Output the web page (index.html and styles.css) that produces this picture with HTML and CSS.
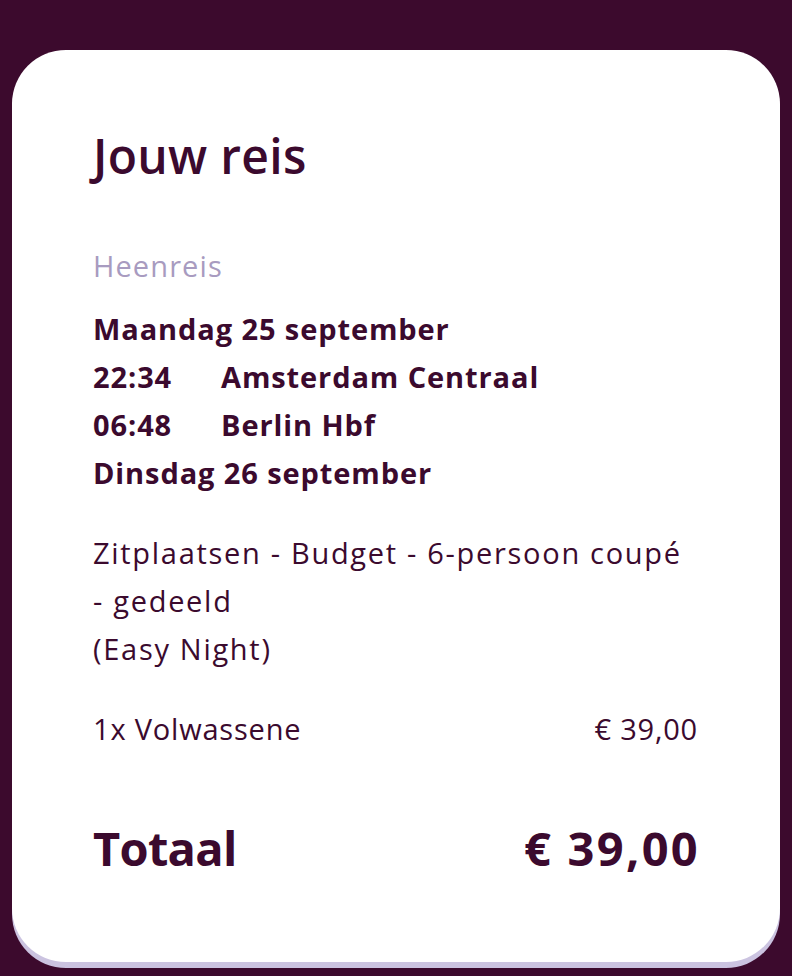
FILE: index.html
```html
<!DOCTYPE html>
<html lang="nl">
<head>
<meta charset="utf-8">
<link rel="stylesheet" href="styles.css">
</head>
<body>
<div class="page">
  <section class="card">
    <h1 class="title">Jouw reis</h1>
    <div class="leg-label">Heenreis</div>
    <div class="journey">
      <div class="line">Maandag 25 september</div>
      <div class="stop"><span class="time">22:34</span><span>Amsterdam Centraal</span></div>
      <div class="stop"><span class="time">06:48</span><span>Berlin Hbf</span></div>
      <div class="line">Dinsdag 26 september</div>
    </div>
    <div class="product">Zitplaatsen - Budget - 6-persoon coupé<br>- gedeeld<br>(Easy Night)</div>
    <div class="row"><span>1x Volwassene</span><span>€ 39,00</span></div>
    <div class="total"><span class="total-label">Totaal</span><span class="total-price">€ 39,00</span></div>
  </section>
</div>
</body>
</html>
```
FILE: styles.css
```css
html, body {
  margin: 0;
  padding: 0;
  background: #3c0a2d;
}
body {
  font-family: "Open Sans", "Lato", sans-serif;
  color: #3b0a2e;
}
.page {
  padding: 50px 12px 0 12px;
  height: 976px;
  box-sizing: border-box;
}
.card {
  background: #fff;
  border-radius: 54px;
  box-shadow: 0 6px 0 #cbc3e0;
  height: 912px;
  box-sizing: border-box;
  padding: 78px 82px 0 81px;
}
.title {
  margin: 0;
  font-size: 48px;
  font-weight: 600;
  line-height: 56px;
  letter-spacing: 0.3px;
}
.leg-label {
  margin-top: 64px;
  font-size: 29px;
  color: #a89bc0;
  font-weight: 500;
  line-height: 36px;
  letter-spacing: 1.1px;
}
.journey {
  margin-top: 21px;
  font-size: 29px;
  font-weight: 700;
  line-height: 48px;
  letter-spacing: 0.9px;
}
.stop {
  display: flex;
}
.time {
  width: 128px;
  flex: none;
}
.product {
  margin-top: 32px;
  font-size: 29px;
  line-height: 48px;
  letter-spacing: 1.7px;
}
.row {
  margin-top: 32px;
  display: flex;
  justify-content: space-between;
  font-size: 29px;
  line-height: 48px;
  letter-spacing: 0.8px;
}
.total {
  margin-top: 67px;
  display: flex;
  justify-content: space-between;
  font-size: 47px;
  font-weight: 700;
  line-height: 56px;
}
.total-label {
  letter-spacing: -0.7px;
}
.total-price {
  letter-spacing: 2.3px;
  margin-right: -2px;
}
```
